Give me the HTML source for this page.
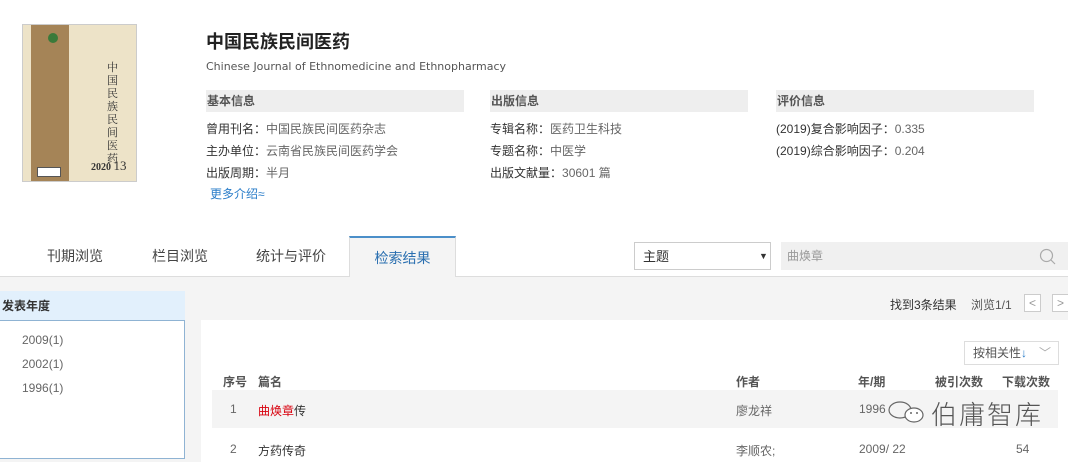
<!DOCTYPE html>
<html><head><meta charset="utf-8"><style>
*{margin:0;padding:0;box-sizing:border-box}
body{width:1068px;height:462px;overflow:hidden;background:#fff;font-family:"Liberation Sans","Noto Sans CJK SC",sans-serif;font-size:12px;color:#333;position:relative}
.a{position:absolute;white-space:nowrap}
.h{background:#eee;height:22px;line-height:22px;font-weight:bold;color:#555;padding-left:1px;font-size:12px}
.g{color:#666}
</style></head><body>
<!-- cover -->
<div class="a" style="left:22px;top:24px;width:115px;height:158px;background:#ede3c8;border:1px solid #ccc;overflow:hidden">
 <div class="a" style="left:8px;top:0;width:38px;height:156px;background:#a58457"></div>
 <div class="a" style="left:25px;top:8px;width:10px;height:10px;border-radius:50%;background:#3a7a3a"></div>
 <div class="a" style="left:14px;top:142px;width:24px;height:10px;background:#fff;border:1px solid #555"></div>
 <div class="a" style="left:84px;top:36px;font-family:'Noto Serif CJK SC',serif;font-size:11px;line-height:13px;width:12px;white-space:normal;color:#333">中国民族民间医药</div>
 <div class="a" style="left:68px;top:133px;font-size:10px;font-weight:bold;font-family:'Liberation Serif',serif">2020 <span style="font-size:13px;font-weight:normal">13</span></div>
</div>
<div class="a" style="left:206px;top:28px;font-size:18px;font-weight:bold;color:#222">中国民族民间医药</div>
<div class="a" style="left:206px;top:60px;color:#555;font-family:'DejaVu Sans',sans-serif;font-size:11px">Chinese Journal of Ethnomedicine and Ethnopharmacy</div>
<div class="a h" style="left:206px;top:90px;width:258px">基本信息</div>
<div class="a h" style="left:490px;top:90px;width:258px">出版信息</div>
<div class="a h" style="left:776px;top:90px;width:258px">评价信息</div>
<div class="a" style="left:206px;top:120px">曾用刊名：<span class="g">中国民族民间医药杂志</span></div>
<div class="a" style="left:206px;top:142px">主办单位：<span class="g">云南省民族民间医药学会</span></div>
<div class="a" style="left:206px;top:164px">出版周期：<span class="g">半月</span></div>
<div class="a" style="left:210px;top:185px;color:#2a7dc9">更多介绍≈</div>
<div class="a" style="left:490px;top:120px">专辑名称：<span class="g">医药卫生科技</span></div>
<div class="a" style="left:490px;top:142px">专题名称：<span class="g">中医学</span></div>
<div class="a" style="left:490px;top:164px">出版文献量：<span class="g">30601 篇</span></div>
<div class="a" style="left:776px;top:120px">(2019)复合影响因子：<span class="g">0.335</span></div>
<div class="a" style="left:776px;top:142px">(2019)综合影响因子：<span class="g">0.204</span></div>
<!-- tabs -->
<div class="a" style="left:0;top:276px;width:1068px;height:186px;background:#f4f4f4;border-top:1px solid #ddd"></div>
<div class="a" style="left:47px;top:246px;font-size:14px;color:#444">刊期浏览</div>
<div class="a" style="left:152px;top:246px;font-size:14px;color:#444">栏目浏览</div>
<div class="a" style="left:256px;top:246px;font-size:14px;color:#444">统计与评价</div>
<div class="a" style="left:349px;top:236px;width:107px;height:41px;background:#f4f4f4;border-top:2px solid #4b8fc9;border-left:1px solid #ddd;border-right:1px solid #ddd;text-align:center;line-height:40px;font-size:14px;color:#2a6fb0">检索结果</div>
<div class="a" style="left:634px;top:242px;width:137px;height:28px;border:1px solid #ccc;background:#fff;line-height:27px;padding-left:8px;font-size:13px">主题<span class="a" style="left:124px;top:0;font-size:9px">▼</span></div>
<div class="a" style="left:781px;top:242px;width:287px;height:28px;background:#f0f0f0;line-height:28px;padding-left:6px;color:#999">曲焕章
 <svg class="a" style="left:258px;top:6px" width="18" height="18"><circle cx="7.5" cy="7.5" r="6" fill="none" stroke="#aaa" stroke-width="1.2"/><line x1="12" y1="12" x2="16" y2="16" stroke="#aaa" stroke-width="1.2"/></svg></div>
<!-- left panel -->
<div class="a" style="left:0;top:291px;width:185px;height:30px;background:#e2f0fc;line-height:30px;font-weight:bold;padding-left:2px;font-size:12px">发表年度</div>
<div class="a" style="left:-1px;top:320px;width:186px;height:139px;background:#fff;border:1px solid #8fb3d3"></div>
<div class="a g" style="left:22px;top:333px">2009(1)</div>
<div class="a g" style="left:22px;top:357px">2002(1)</div>
<div class="a g" style="left:22px;top:381px">1996(1)</div>
<!-- results -->
<div class="a" style="left:890px;top:296px">找到3条结果</div>
<div class="a" style="left:971px;top:296px;color:#555">浏览1/1</div>
<div class="a" style="left:1024px;top:294px;width:17px;height:18px;border:1px solid #ccc;background:#fff;text-align:center;line-height:16px;color:#999">&lt;</div>
<div class="a" style="left:1052px;top:294px;width:17px;height:18px;border:1px solid #ccc;background:#fff;text-align:center;line-height:16px;color:#999">&gt;</div>
<div class="a" style="left:201px;top:320px;width:867px;height:142px;background:#fff"></div>
<div class="a" style="left:964px;top:341px;width:95px;height:24px;border:1px solid #ddd;line-height:22px;padding-left:8px;color:#555">按相关性<span style="color:#2a7dc9">↓</span><span style="color:#aaa;margin-left:12px">﹀</span></div>
<div class="a" style="left:223px;top:373px;font-weight:bold;color:#555">序号</div>
<div class="a" style="left:258px;top:373px;font-weight:bold;color:#555">篇名</div>
<div class="a" style="left:736px;top:373px;font-weight:bold;color:#555">作者</div>
<div class="a" style="left:858px;top:373px;font-weight:bold;color:#555">年/期</div>
<div class="a" style="left:935px;top:373px;font-weight:bold;color:#555">被引次数</div>
<div class="a" style="left:1002px;top:373px;font-weight:bold;color:#555">下载次数</div>
<div class="a" style="left:212px;top:390px;width:846px;height:38px;background:#f4f4f4"></div>
<div class="a g" style="left:230px;top:402px">1</div>
<div class="a" style="left:258px;top:402px"><span style="color:#d8000d">曲焕章</span>传</div>
<div class="a g" style="left:736px;top:402px">廖龙祥</div>
<div class="a g" style="left:859px;top:402px">1996</div>
<svg class="a" style="left:884px;top:398px" width="44" height="28"><ellipse cx="16" cy="12" rx="11" ry="8" fill="none" stroke="#666" stroke-width="1.2"/><ellipse cx="30" cy="17" rx="9" ry="7" fill="#fff" stroke="#666" stroke-width="1.2"/><circle cx="27" cy="15" r="1" fill="#666"/><circle cx="33" cy="15" r="1" fill="#666"/></svg>
<div class="a" style="left:931px;top:395px;color:#555;font-size:26px;font-family:'Noto Sans CJK SC',sans-serif;font-weight:300;letter-spacing:2px">伯庸智库</div>
<div class="a g" style="left:230px;top:442px">2</div>
<div class="a" style="left:258px;top:442px">方药传奇</div>
<div class="a g" style="left:736px;top:442px">李顺农;</div>
<div class="a g" style="left:859px;top:442px">2009/ 22</div>
<div class="a g" style="left:1016px;top:442px">54</div>
</body></html>
